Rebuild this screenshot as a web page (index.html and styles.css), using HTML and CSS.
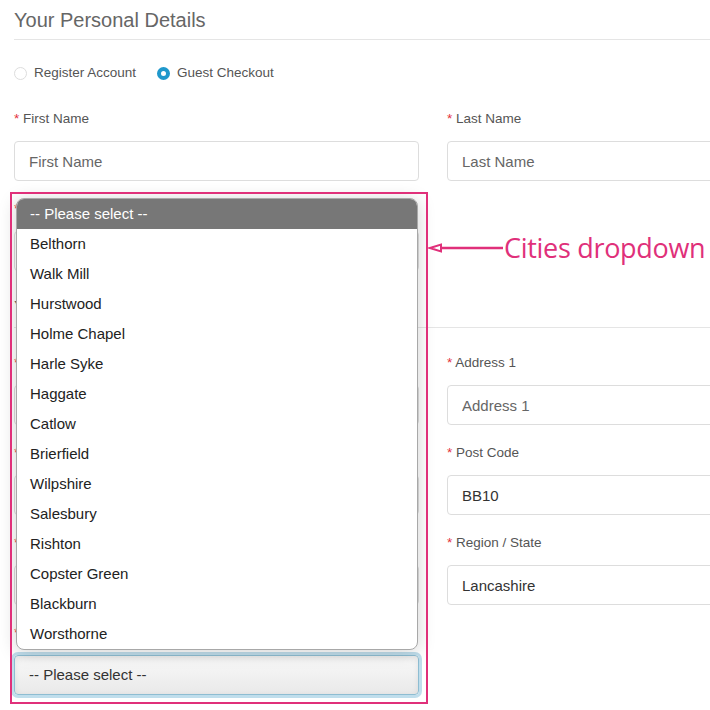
FILE: index.html
```html
<!DOCTYPE html>
<html>
<head>
<meta charset="UTF-8">
<title>Checkout</title>
<link rel="stylesheet" href="styles.css">
</head>
<body>
<div class="page">
  <h2 class="legend">Your Personal Details</h2>
  <div class="radios">
    <label class="radio"><span class="dot"></span>Register Account</label>
    <label class="radio"><span class="dot on"></span>Guest Checkout</label>
  </div>

  <div class="row first">
    <div class="field">
      <label class="lbl"><span class="req">*</span> First Name</label>
      <input class="box" type="text" placeholder="First Name">
    </div>
    <div class="field">
      <label class="lbl"><span class="req">*</span> Last Name</label>
      <input class="box" type="text" placeholder="Last Name">
    </div>
    <div class="field">
      <label class="lbl"><span class="req">*</span> E-Mail</label>
      <input class="box" type="text" placeholder="E-Mail">
    </div>
  </div>

  <h2 class="legend second">Your Address</h2>

  <div class="row">
    <div class="field">
      <label class="lbl"><span class="req">*</span> Company</label>
      <input class="box" type="text" placeholder="Company">
    </div>
    <div class="field">
      <label class="lbl"><span class="req">*</span> Address 1</label>
      <input class="box" type="text" placeholder="Address 1">
    </div>
    <div class="field">
      <label class="lbl"><span class="req">*</span> Address 2</label>
      <input class="box" type="text" placeholder="Address 2">
    </div>
    <div class="field">
      <label class="lbl"><span class="req">*</span> Post Code</label>
      <input class="box" type="text" value="BB10">
    </div>
    <div class="field">
      <label class="lbl"><span class="req">*</span> Country</label>
      <input class="box" type="text" value="United Kingdom">
    </div>
    <div class="field">
      <label class="lbl"><span class="req">*</span> Region / State</label>
      <input class="box" type="text" value="Lancashire">
    </div>
    <div class="field">
      <label class="lbl"><span class="req">*</span> City</label>
      <div class="select-wrap">
        <div class="select">-- Please select --</div>

        <ul class="options">
          <li class="head">-- Please select --</li>
          <li>Belthorn</li>
          <li>Walk Mill</li>
          <li>Hurstwood</li>
          <li>Holme Chapel</li>
          <li>Harle Syke</li>
          <li>Haggate</li>
          <li>Catlow</li>
          <li>Brierfield</li>
          <li>Wilpshire</li>
          <li>Salesbury</li>
          <li>Rishton</li>
          <li>Copster Green</li>
          <li>Blackburn</li>
          <li>Worsthorne</li>
        </ul>

        <div class="mark">
          <div class="note">
            <svg class="arrow" width="76" height="12" viewBox="0 0 76 12">
              <path d="M75 6 H4" stroke="#e0307a" stroke-width="2.5" fill="none"/>
              <path d="M2 6 L13 2.5 L13 9.5 Z" stroke="#e0307a" stroke-width="2" fill="#fff"/>
            </svg>
            <span>Cities dropdown</span>
          </div>
        </div>
      </div>
    </div>
  </div>
</div>
</body>
</html>
```
FILE: styles.css
```css
html, body {
    margin: 0;
    overflow: hidden;
    background: #fff;
}
body {
    font-family: Arial, "Liberation Sans", sans-serif;
    color: #555;
}
.page {
    width: 900px;
    padding: 6px 0 0 14px;
}
.legend {
    margin: 0;
    font-size: 20px;
    font-weight: normal;
    line-height: 28px;
    color: #666;
    padding-bottom: 5px;
    border-bottom: 1px solid #e5e5e5;
}
.legend.second {
    margin-top: 5px;
}
.radios {
    margin-top: 23px;
    display: flex;
    gap: 21px;
    height: 20px;
}
.radio {
    display: flex;
    align-items: center;
    font-size: 13.5px;
    line-height: 20px;
    color: #555;
}
.dot {
    width: 11px;
    height: 11px;
    border: 1px solid #ddd;
    border-radius: 50%;
    margin-right: 7px;
    box-sizing: content-box;
}
.dot.on {
    width: 5px;
    height: 5px;
    border: 4px solid #1f98cc;
    background: #fff;
}

.row {
    display: grid;
    grid-template-columns: 405px 405px;
    column-gap: 28px;
    margin-top: 25px;
}
.row.first {
    margin-top: 26px;
}
.field {
    margin-bottom: 18px;
}
.lbl {
    display: block;
    font-size: 13.5px;
    line-height: 20px;
    margin-bottom: 12px;
    color: #555;
}
.req {
    color: #e4303c;
}
.box {
    display: block;
    box-sizing: border-box;
    width: 100%;
    height: 40px;
    border: 1px solid #ddd;
    border-radius: 4px;
    padding: 0 14px;
    font-family: Arial, "Liberation Sans", sans-serif;
    font-size: 15px;
    color: #333;
    background: #fff;
}
.box::placeholder {
    color: #666;
}

.select-wrap {
    position: relative;
}
.select {
    box-sizing: border-box;
    height: 40px;
    border: 1px solid #8ebdd2;
    border-radius: 4px;
    padding: 0 14px;
    font-size: 15px;
    line-height: 38px;
    color: #333;
    background: linear-gradient(#f9f9f9, #e9e9e9);
    box-shadow: 0 0 0 3px rgba(140, 195, 220, 0.55), inset 0 2px 6px rgba(0, 0, 0, 0.08);
}

.options {
    position: absolute;
    left: 2px;
    bottom: calc(100% + 5px);
    width: 402px;
    margin: 0;
    padding: 0;
    list-style: none;
    background: #fff;
    border: 1px solid #a8a8a8;
    border-radius: 8px;
    overflow: hidden;
    box-shadow: 0 2px 18px rgba(0, 0, 0, 0.18);
    box-sizing: border-box;
}
.options li {
    height: 30px;
    line-height: 30px;
    padding-left: 13px;
    font-size: 15px;
    color: #222;
}
.options li.head {
    background: #777;
    color: #fff;
}

.mark {
    position: absolute;
    left: -4px;
    top: -463px;
    width: 418px;
    height: 512px;
    border: 2px solid #e0307a;
    box-sizing: border-box;
    pointer-events: none;
}
.note {
    position: absolute;
    left: 416px;
    top: 35px;
    display: flex;
    align-items: center;
    white-space: nowrap;
}
.arrow {
    display: block;
}
.note span {
    font-family: "Open Sans", sans-serif;
    font-size: 27px;
    color: #e0307a;
    letter-spacing: -0.3px;
}
```
